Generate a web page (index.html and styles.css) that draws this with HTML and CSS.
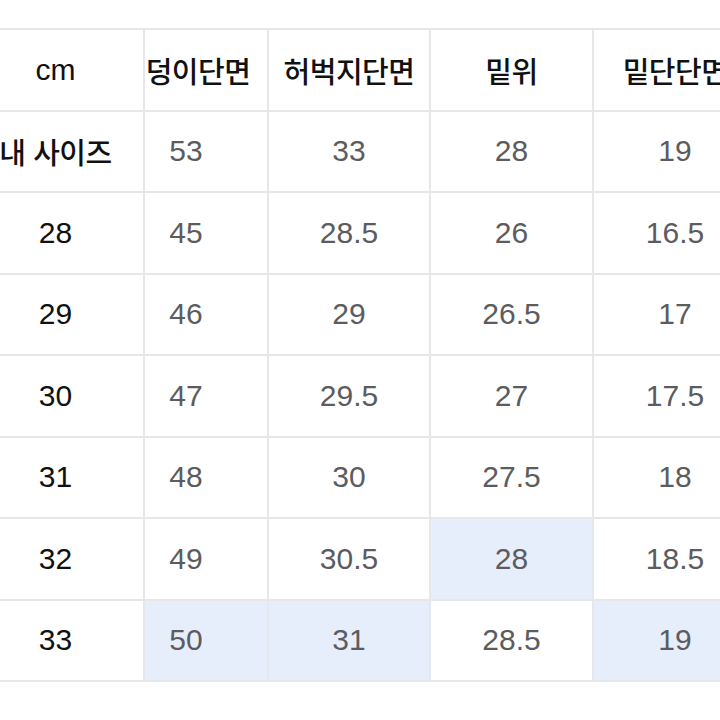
FILE: index.html
```html
<!DOCTYPE html>
<html lang="ko">
<head>
<meta charset="utf-8">
<title>사이즈표</title>
<link rel="stylesheet" href="styles.css">
</head>
<body>
<div class="page">
<table class="size-table">
  <colgroup>
    <col class="c0"><col class="c1"><col class="c2"><col class="c3"><col class="c4">
  </colgroup>
  <thead>
    <tr>
      <th class="label">cm</th>
      <th class="h1">덩이단면</th>
      <th>허벅지단면</th>
      <th>밑위</th>
      <th>밑단단면</th>
    </tr>
  </thead>
  <tbody>
    <tr><th class="label kr">내 사이즈</th><td class="n1">53</td><td>33</td><td>28</td><td>19</td></tr>
    <tr><th class="label">28</th><td class="n1">45</td><td>28.5</td><td>26</td><td>16.5</td></tr>
    <tr><th class="label">29</th><td class="n1">46</td><td>29</td><td>26.5</td><td>17</td></tr>
    <tr><th class="label">30</th><td class="n1">47</td><td>29.5</td><td>27</td><td>17.5</td></tr>
    <tr><th class="label">31</th><td class="n1">48</td><td>30</td><td>27.5</td><td>18</td></tr>
    <tr><th class="label">32</th><td class="n1">49</td><td>30.5</td><td class="hl">28</td><td>18.5</td></tr>
    <tr><th class="label">33</th><td class="n1 hl">50</td><td class="hl">31</td><td>28.5</td><td class="hl">19</td></tr>
  </tbody>
</table>
</div>
</body>
</html>
```

FILE: styles.css
```css
html, body {
  margin: 0;
  padding: 0;
  background: #ffffff;
  width: 720px;
  height: 720px;
  overflow: hidden;
}

.page {
  padding-top: 28px;
  margin-left: -34px;
}

.size-table {
  border-collapse: collapse;
  table-layout: fixed;
  width: 790px;
  font-family: "Liberation Sans", "Noto Sans CJK KR", sans-serif;
}

.c0 { width: 177px; }
.c1 { width: 124px; }
.c2 { width: 162px; }
.c3 { width: 163px; }
.c4 { width: 164px; }

.size-table th,
.size-table td {
  border: 2px solid #e7e7e9;
  height: 79.5px;
  padding: 0;
  text-align: center;
  vertical-align: middle;
  white-space: nowrap;
  overflow: visible;
}

.size-table thead th {
  font-family: "Noto Sans CJK KR", "Liberation Sans", sans-serif;
  font-size: 29px;
  font-weight: 500;
  color: #111111;
  letter-spacing: -0.5px;
}

.size-table thead th.label {
  font-family: "Liberation Sans", sans-serif;
  font-size: 30px;
  font-weight: 400;
  letter-spacing: 0;
}

.size-table thead th.h1 {
  padding-right: 16px;
}

.size-table tbody th.label {
  font-size: 30px;
  font-weight: 400;
  color: #111111;
}

.size-table tbody th.kr {
  font-family: "Noto Sans CJK KR", sans-serif;
  font-size: 29px;
  font-weight: 500;
  letter-spacing: -0.5px;
}

.size-table td {
  font-size: 30px;
  color: #5c5c60;
}

.size-table td.n1 {
  padding-right: 40px;
}

.size-table td.hl {
  background: #e7eefb;
  border-color: #e3e7ee;
}
```
